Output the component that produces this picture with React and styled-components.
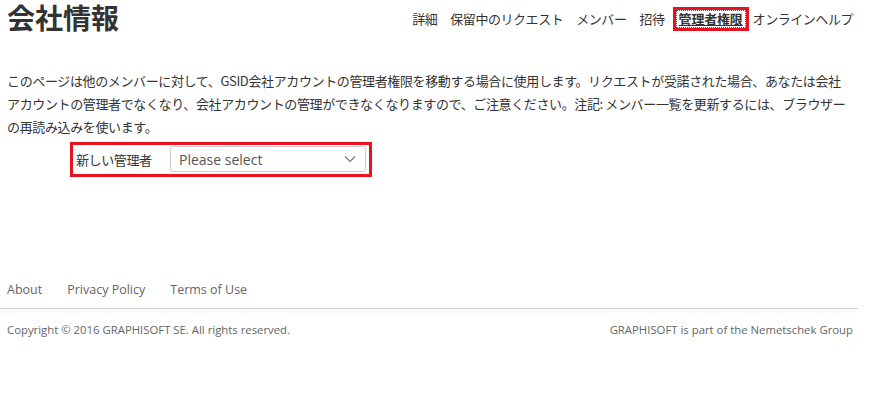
import React from "react";
import styled, { createGlobalStyle } from "styled-components";

const GlobalStyle = createGlobalStyle`
  body {
    margin: 0;
    background: #fff;
    font-family: "Open Sans", "Noto Sans CJK JP", sans-serif;
    color: #333;
  }
`;

const navItems = [
  { label: "詳細" },
  { label: "保留中のリクエスト" },
  { label: "メンバー" },
  { label: "招待" },
  { label: "管理者権限", active: true },
  { label: "オンラインヘルプ" },
];

const footerLinks = ["About", "Privacy Policy", "Terms of Use"];

const App = () => {
  return (
    <>
      <GlobalStyle />
      <Page>
        <Header>
          <Title>会社情報</Title>
          <Nav>
            {navItems.map((item) => (
              <NavLink key={item.label} href="#" $active={item.active}>
                {item.label}
              </NavLink>
            ))}
          </Nav>
        </Header>

        <Intro>
          このページは他のメンバーに対して、GSID会社アカウントの管理者権限を移動する場合に使用します。リクエストが受諾された場合、あなたは会社アカウントの管理者でなくなり、会社アカウントの管理ができなくなりますので、ご注意ください。注記:
          メンバー一覧を更新するには、ブラウザーの再読み込みを使います。
        </Intro>

        <FormRow>
          <Label>新しい管理者</Label>
          <Select>
            <span>Please select</span>
            <svg width="12" height="8" viewBox="0 0 12 8">
              <path d="M1 1.5 L6 6.5 L11 1.5" fill="none" stroke="#777" strokeWidth="1.2" />
            </svg>
          </Select>
        </FormRow>

        <Footer>
          <FooterLinks>
            {footerLinks.map((l) => (
              <FooterLink key={l} href="#">
                {l}
              </FooterLink>
            ))}
          </FooterLinks>
          <Divider />
          <Legal>
            <span>Copyright © 2016 GRAPHISOFT SE. All rights reserved.</span>
            <span>GRAPHISOFT is part of the Nemetschek Group</span>
          </Legal>
        </Footer>
      </Page>
    </>
  );
};

const Page = styled.div`
  width: 858px;
`;

const Header = styled.header`
  display: flex;
  justify-content: space-between;
  align-items: flex-start;
  padding: 0 5px 0 7px;
  height: 36px;
`;

const Title = styled.h1`
  margin: 0;
  font-family: "Noto Sans CJK JP", sans-serif;
  font-size: 28px;
  line-height: 34px;
  font-weight: 700;
  color: #333;
`;

const Nav = styled.nav`
  display: flex;
  gap: 13px;
  margin-top: 10px;
`;

const NavLink = styled.a`
  font-family: "Noto Sans CJK JP", sans-serif;
  font-size: 13px;
  line-height: 18px;
  color: #333;
  text-decoration: none;
  letter-spacing: -0.45px;

  ${({ $active }) =>
    $active &&
    `
    font-weight: 700;
    letter-spacing: -0.2px;
    text-decoration: underline;
    border: 3px solid #e8131f;
    padding: 0 3px;
    margin: -3px -9px 0 -5px;
    outline: 1px dotted #555;
    outline-offset: -4px;
  `}
`;

const Intro = styled.p`
  margin: 33px 0 0;
  padding: 0 10px 0 7px;
  font-family: "Noto Sans CJK JP", sans-serif;
  font-size: 13px;
  line-height: 23px;
  color: #333;
  letter-spacing: -0.37px;
`;

const FormRow = styled.div`
  display: flex;
  align-items: center;
  width: 302px;
  box-sizing: border-box;
  margin: 4px 0 0 70px;
  border: 3px solid #e8131f;
  padding: 1px 3px 2px;
`;

const Label = styled.label`
  width: 94px;
  flex-shrink: 0;
  font-family: "Noto Sans CJK JP", sans-serif;
  font-size: 13px;
  color: #333;
  letter-spacing: -0.4px;
`;

const Select = styled.div`
  flex: 1;
  height: 26px;
  box-sizing: border-box;
  border: 1px solid #ccc;
  border-radius: 3px;
  display: flex;
  align-items: center;
  justify-content: space-between;
  padding: 0 9px 0 8px;
  font-family: "Open Sans", sans-serif;
  font-size: 14px;
  color: #555;
`;

const Footer = styled.footer`
  margin-top: 104px;
`;

const FooterLinks = styled.div`
  display: flex;
  gap: 25px;
  padding: 0 0 9px 7px;
`;

const FooterLink = styled.a`
  font-family: "Open Sans", sans-serif;
  font-size: 12.5px;
  line-height: 18px;
  color: #666;
  text-decoration: none;
`;

const Divider = styled.div`
  height: 1px;
  background: #d0d0d0;
  box-shadow: 0 2px 4px rgba(0, 0, 0, 0.12);
`;

const Legal = styled.div`
  display: flex;
  justify-content: space-between;
  padding: 13px 5px 0 7px;
  font-family: "Open Sans", sans-serif;
  font-size: 11.35px;
  line-height: 16px;
  color: #666;
`;

export default App;
